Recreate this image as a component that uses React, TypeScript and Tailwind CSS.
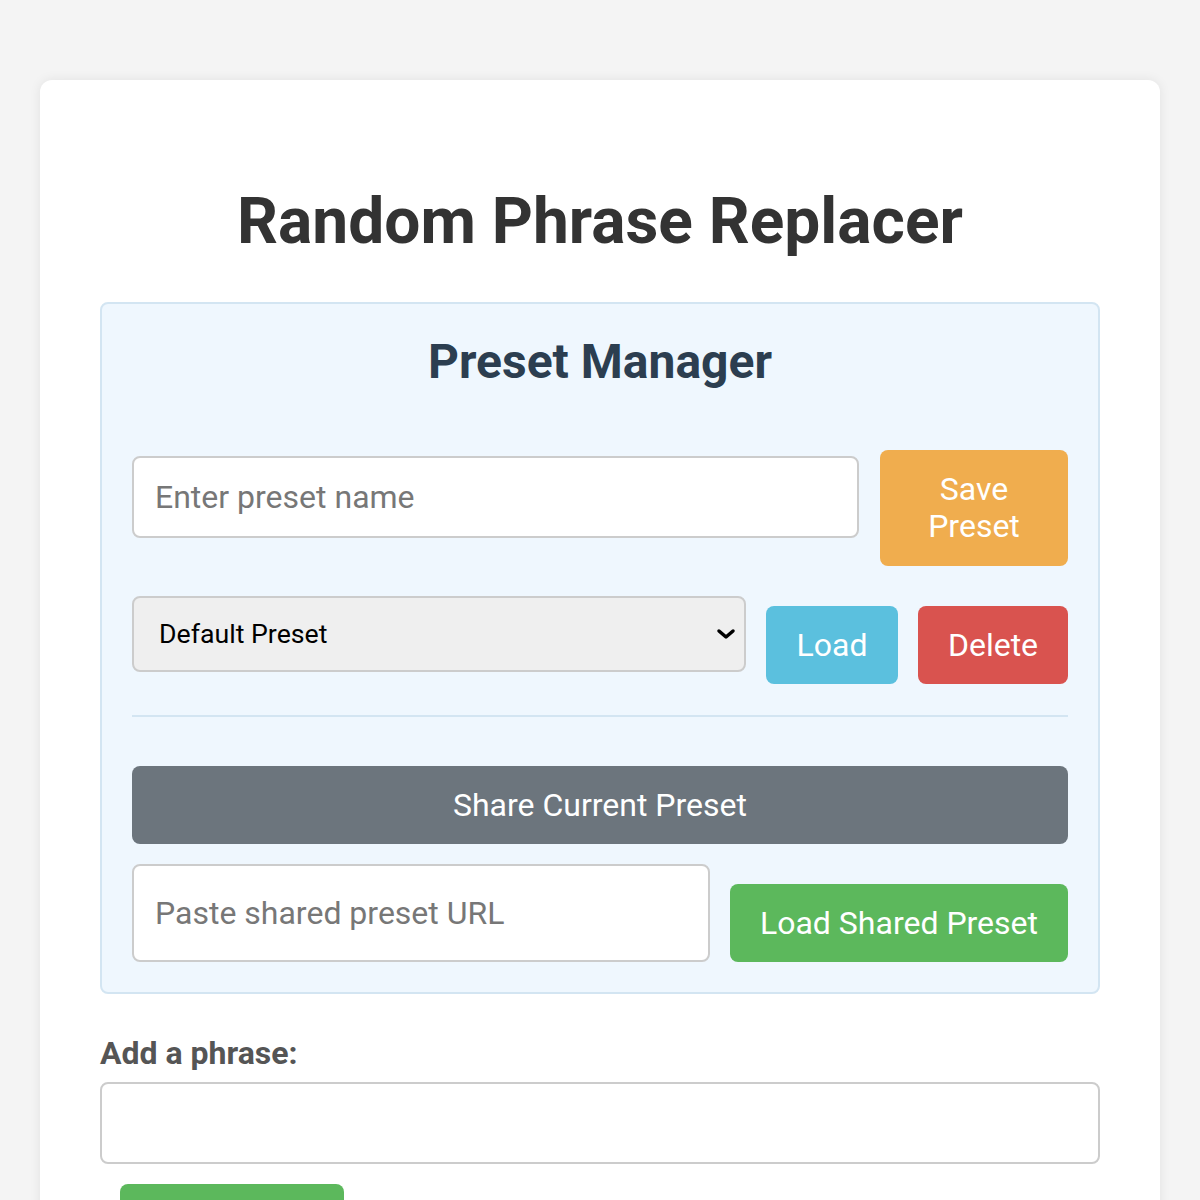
export default function App() {
  return (
    <div className="min-h-screen bg-[#f4f4f4] px-10 pt-20 font-['Roboto',sans-serif]">
      <div className="rounded-xl bg-white px-[60px] pb-10 pt-[40px] shadow-[0_0_12px_rgba(0,0,0,0.08)]">
        <h1 className="mb-[42px] mt-[64px] text-center text-[64px] font-bold leading-[76px] text-[#333]">
          Random Phrase Replacer
        </h1>

        {/* preset manager */}
        <div className="rounded-lg border-2 border-[#d3e5f2] bg-[#eff7fe] px-[30px] pb-[30px] pt-[20px]">
          <h2 className="mb-[50px] text-center text-[48px] font-bold leading-[76px] text-[#2c3e50]">
            Preset Manager
          </h2>

          <div className="flex items-start gap-[21px]">
            <input
              placeholder="Enter preset name"
              className="mt-[6px] h-[82px] flex-1 rounded-lg border-2 border-[#ccc] bg-white px-[21px] text-[32px] text-[#333] outline-none placeholder:text-[#777]"
            />
            <button className="h-[116px] w-[188px] rounded-lg bg-[#f0ad4e] px-4 text-[32px] leading-[37px] text-white">
              Save Preset
            </button>
          </div>

          <div className="mt-[30px] flex items-start gap-[20px]">
            <div className="relative flex h-[76px] flex-1 items-center rounded-lg border-2 border-[#ccc] bg-[#efefef] px-[25px] text-[26.7px] text-black">
              Default Preset
              <svg
                className="absolute right-[8px] top-1/2 -translate-y-1/2"
                width="20"
                height="12"
                viewBox="0 0 20 12"
              >
                <path d="M3 3 L10 9 L17 3" fill="none" stroke="#000" strokeWidth="3.5" strokeLinecap="round" strokeLinejoin="round" />
              </svg>
            </div>
            <button className="mt-[10px] h-[78px] w-[132px] rounded-lg bg-[#5bc0de] text-[32px] text-white">Load</button>
            <button className="mt-[10px] h-[78px] w-[150px] rounded-lg bg-[#d9534f] text-[32px] text-white">Delete</button>
          </div>

          <div className="mt-[31px] h-[2px] bg-[#d3e5f2]" />

          <button className="mt-[49px] h-[78px] w-full rounded-lg bg-[#6c757d] text-[32px] text-white">
            Share Current Preset
          </button>

          <div className="mt-[20px] flex items-end gap-[20px]">
            <input
              placeholder="Paste shared preset URL"
              className="h-[98px] flex-1 rounded-lg border-2 border-[#ccc] bg-white px-[21px] text-[32px] text-[#333] outline-none placeholder:text-[#777]"
            />
            <button className="h-[78px] w-[338px] rounded-lg bg-[#5cb85c] text-[32px] text-white">
              Load Shared Preset
            </button>
          </div>
        </div>

        <label className="mt-[36px] block text-[32px] font-bold leading-[46px] text-[#555]">Add a phrase:</label>
        <input className="mt-[6px] h-[82px] w-full rounded-lg border-2 border-[#ccc] bg-white px-[21px] text-[32px] outline-none" />
        <button className="ml-[20px] mt-[20px] h-[78px] w-[224px] rounded-lg bg-[#5cb85c] text-[32px] text-white">
          Add Phrase
        </button>
      </div>
    </div>
  );
}
